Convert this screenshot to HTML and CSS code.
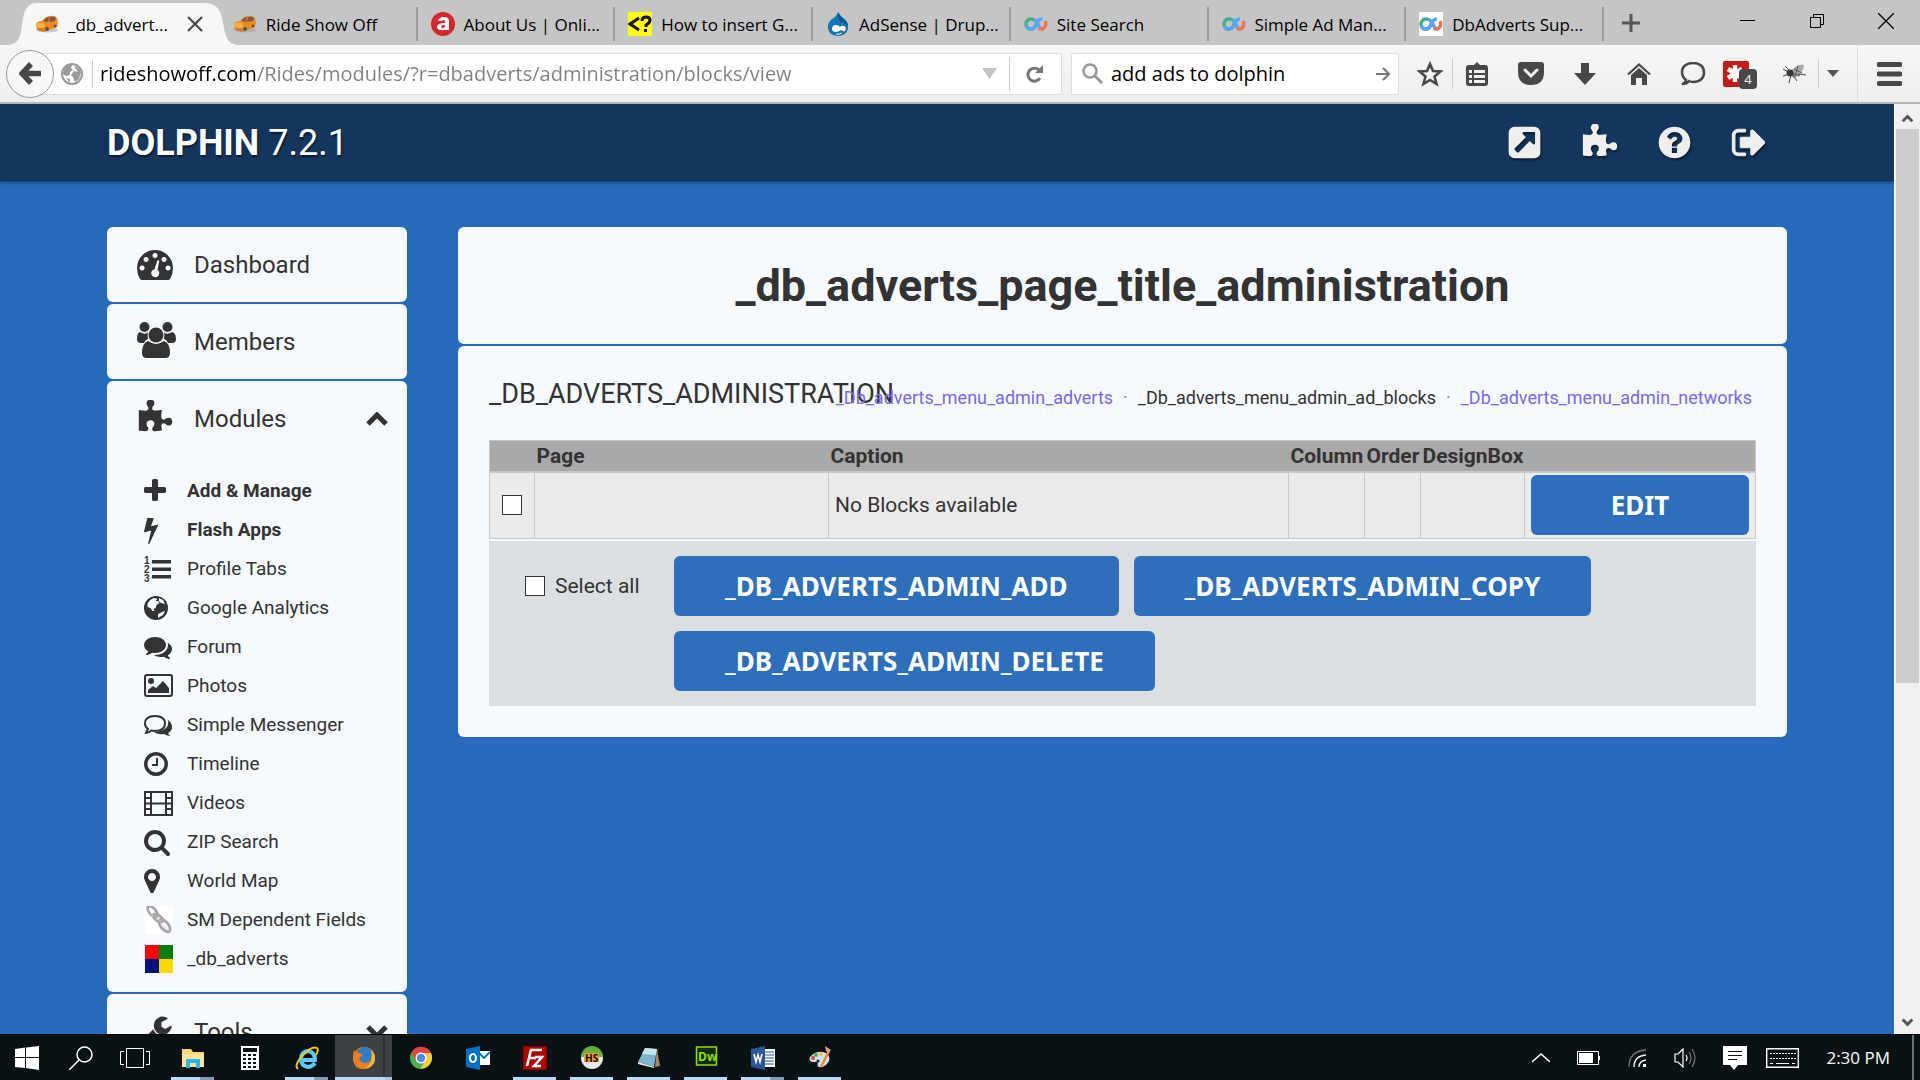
FILE: index.html
```html
<!DOCTYPE html>
<html lang="en">
<head>
    <meta charset="UTF-8" />
    <title>_db_adverts_page_title_administration</title>
    <link rel="stylesheet" href="styles.css">
</head>
<body>
    <!-- shared icons -->
    <svg class="sprite" aria-hidden="true">
        <symbol id="car" viewBox="0 0 24 20">
            <ellipse cx="12" cy="16" rx="11" ry="2.5" fill="#999" opacity=".5"/>
            <path d="M1 9q3-2 6-2 3-4 7-5 6-1 8 2l1 5-1 4-5 2-8 3-6-2q-2-2-2-7z" fill="#ef8a1d"/>
            <path d="M8 7q3-4 6-4l-1 5zM15 3q4-1 6 1l-1 3-6 1z" fill="#7d5a49"/>
            <path d="M1 9q4-1 8 0l1 4q-4 2-8 0z" fill="#f9b23c"/>
            <path d="M2 14l7 1v3l-6-2z" fill="#c87a2d"/>
            <circle cx="12" cy="15" r="2" fill="#555"/><circle cx="20" cy="12" r="1.500" fill="#555"/>
        </symbol>
        <symbol id="loop" viewBox="0 0 24 24">
            <g fill="none" stroke-width="3.5">
                <path d="M11 15a5 5 0 1 1-1-7" stroke="#43b08c"/>
                <path d="M2 14q2 4 6 3 3-1 4-5 2-5 6-5" stroke="#58a6ee"/>
                <path d="M10 8q3 1 4 4 1 5 5 5" stroke="#58a6ee"/>
                <path d="M15 16q2 2 5 0 3-3 1-7" stroke="#ee7456"/>
            </g>
        </symbol>
        <symbol id="puzzle" viewBox="0 0 1792 1792">
            <path d="M1755 1083q0 81-44.500 135t-123.500 54q-41 0-77.500-17.500t-59-38-56.500-38-71-17.500q-110 0-110 124 0 39 16 115t15 115v5q-22 0-33 1-34 3-97.500 11.500t-115.500 13.500-98 5q-61 0-103-26.500t-42-83.500q0-37 17.500-71t38-56.500 38-59 17.500-77.500q0-79-54-123.500t-135-44.500q-84 0-143 45.500t-59 127.500q0 43 15 83t33.500 64.500 33.500 53 15 50.500q0 45-46 89-37 35-117 35-95 0-245-24-9-2-27.500-4t-27.500-4l-13-2q-1 0-3-1-2 0-2-1v-1024q2 1 17.500 3.500t34 5 21.500 3.500q150 24 245 24 80 0 117-35 46-44 46-89 0-22-15-50.500t-33.500-53-33.500-64.500-15-83q0-82 59-127.500t144-45.500q80 0 134 44.500t54 123.500q0 41-17.500 77.500t-38 59-38 56.500-17.500 71q0 57 42 83.500t103 26.500q64 0 180-15t163-17v2q-1 2-3.500 17.500t-5 34-3.500 21.500q-24 150-24 245 0 80 35 117 44 46 89 46 22 0 50.500-15t53-33.500 64.500-33.500 83-15q82 0 127.500 59t45.500 143z"/>
        </symbol>
    </svg>

    <div class="window">
        <div class="tabbar">
            <div class="tabs">
                <div class="tab active">
                    <svg class="shape" width="240" height="42" viewBox="0 0 240 42"><path d="M4 42C16 42 18 36 20 22 22 5 26 0 36 0H202C214 0 219 6 221 20 224 36 226 42 238 42Z"/></svg>
                    <button class="tab-name"><svg class="fav"><use href="#car"/></svg>_db_advert...</button>
                    <button class="tab-close" aria-label="Close tab"><svg width="16" height="16" viewBox="0 0 16 16"><path d="M1 1l14 14M15 1L1 15" stroke="#444" stroke-width="2"/></svg></button>
                </div>
                <div class="tab"><button class="tab-name"><svg class="fav"><use href="#car"/></svg>Ride Show Off</button></div>
                <div class="tab"><button class="tab-name">
                    <svg class="fav" viewBox="0 0 24 24"><circle cx="12" cy="12" r="12" fill="#d9262c"/><path d="M7 9q1-4 6-4t5 4v9h-4q-7 1-8-3 0-4 8-4V9q-2-2-3 0z" fill="#fff"/><path d="M14 13q-4 0-4 2 1 2 4 0z" fill="#d9262c"/></svg>About Us | Onli...</button></div>
                <div class="tab"><button class="tab-name">
                    <svg class="fav" viewBox="0 0 24 24"><path d="M0 0h24v24H0z" fill="#ff0"/><path d="M11 6L2 12l9 6" fill="none" stroke="#111" stroke-width="3"/><path d="M14 9q0-4 4-4t4 3-4 5v2" fill="none" stroke="#111" stroke-width="3"/><path d="M16 17h3v3h-3z" fill="#111"/></svg>How to insert G...</button></div>
                <div class="tab"><button class="tab-name">
                    <svg class="fav" viewBox="0 0 24 24"><path d="M12 0q2 4 6 7 5 4 4 10-2 7-10 7T2 17Q1 11 6 7q5-3 6-7z" fill="#0c76b8"/><path d="M12 0q2 4 6 7 4 3 4 7-4-4-8-4-2-4-2-10z" fill="#045a94"/><path d="M6 17q0-4 4-4 3 0 4 2 2-2 4-1 3 1 1 5-1 1-4-1-3 2-5 2-4 0-4-3z" fill="#fff"/><path d="M10 22q3 1 6-1" stroke="#fff" fill="none"/></svg>AdSense | Drup...</button></div>
                <div class="tab"><button class="tab-name"><svg class="fav"><use href="#loop"/></svg>Site Search</button></div>
                <div class="tab"><button class="tab-name"><svg class="fav"><use href="#loop"/></svg>Simple Ad Man...</button></div>
                <div class="tab"><button class="tab-name"><svg class="fav white"><use href="#loop"/></svg>DbAdverts Sup...</button></div>
            </div>
            <button class="newtab" aria-label="New tab"><svg width="18" height="18" viewBox="0 0 18 18"><path d="M9 0v18M0 9h18" stroke="#555" stroke-width="3"/></svg></button>
            <button class="winbtn" aria-label="Minimize"><svg width="16" height="16" viewBox="0 0 16 16"><path d="M0 7.500h15" stroke="#000"/></svg></button>
            <button class="winbtn" aria-label="Restore"><svg width="16" height="16" viewBox="0 0 16 16" fill="none" stroke="#000"><path d="M1.500 4.500h10v10h-10zM4.500 4V1.500h10v10H12"/></svg></button>
            <button class="winbtn" aria-label="Close"><svg width="16" height="16" viewBox="0 0 16 16"><path d="M0 0l16 16M16 0L0 16" stroke="#000" stroke-width="1.300"/></svg></button>
        </div>

        <div class="toolbar">
            <button class="back" aria-label="Back"><svg width="22" height="23" viewBox="0 0 22 23"><path d="M12 2L3 11.500l9 9.500M4 11.500h18" fill="none" stroke="#484848" stroke-width="5.500"/></svg></button>
            <div class="urlbar">
                <svg class="globe" width="22" height="22" viewBox="0 0 22 22"><circle cx="11" cy="11" r="10" fill="#fff" stroke="#999" stroke-width="2"/><path d="M3 6q4-5 8-4l-1 3 2 2-3 2v3l-4 1-3-2zM13 3q5 1 7 6l-2 7-4 3-2-5-2-2 3-4 4 1-2-3zM5 15l4 1v4z" fill="#999"/></svg>
                <input class="url" type="text" aria-label="Address" value="rideshowoff.com/Rides/modules/?r=dbadverts/administration/blocks/view">
                <svg class="drop" width="15" height="11" viewBox="0 0 15 11"><path d="M0 0h15L7.500 11z" fill="#c4c4c4"/></svg>
                <button class="reload" aria-label="Reload"><svg width="18" height="18" viewBox="0 0 18 18"><path d="M14 13a6.500 6.500 0 1 1-1-8" fill="none" stroke="#777" stroke-width="3"/><path d="M17 0v8H9z" fill="#777"/></svg></button>
            </div>
            <div class="search">
                <svg width="21" height="21" viewBox="0 0 21 21" fill="none" stroke="#999"><circle cx="8" cy="8" r="6.500" stroke-width="2.500"/><path d="M13 13l7 7" stroke-width="3"/></svg>
                <input type="text" aria-label="Search" value="add ads to dolphin">
                <button aria-label="Go"><svg width="14" height="14" viewBox="0 0 14 14" fill="none" stroke="#777" stroke-width="2"><path d="M0 7h12M7 1l6 6-6 6"/></svg></button>
            </div>
            <button class="tool star" aria-label="Bookmark"><svg width="26" height="26" viewBox="0 0 26 26"><path d="M13 3l3 7 7.500.500-6 5 2 7.500-6.500-4-6.500 4 2-7.500-6-5L10 10z" fill="none" stroke="#484848" stroke-width="2.600"/></svg></button>
            <button class="tool line" aria-label="Bookmarks"><svg width="22" height="24" viewBox="0 0 22 24"><path d="M8 3l3-3 3 3h5q3 0 3 3v15q0 3-3 3H3q-3 0-3-3V6q0-3 3-3z" fill="#484848"/><path d="M3 8h3v3H3zM8 8h11v3H8zM3 13h3v3H3zM8 13h11v3H8zM3 18h3v3H3zM8 18h11v3H8z" fill="#f2f2f2"/></svg></button>
            <button class="tool" aria-label="Pocket"><svg width="26" height="23" viewBox="0 0 26 23"><path d="M3 0h20q3 0 3 3v7q0 13-13 13T0 10V3q0-3 3-3z" fill="#484848"/><path d="M7 8l6 6 6-6" fill="none" stroke="#f2f2f2" stroke-width="3" stroke-linecap="round"/></svg></button>
            <button class="tool" aria-label="Downloads"><svg width="22" height="22" viewBox="0 0 22 22"><path d="M7 0h8v10h7L11 22 0 10h7z" fill="#484848"/></svg></button>
            <button class="tool" aria-label="Home"><svg width="24" height="22" viewBox="0 0 24 22"><path d="M12 0l12 11-2 1L12 3 2 12l-2-1zM12 5l8 7v10h-5v-7H9v7H4V12z" fill="#484848"/></svg></button>
            <button class="tool" aria-label="Chat"><svg width="26" height="24" viewBox="0 0 26 24"><path d="M2 22q4-1 4-4-4-3-4-8 0-4 3-6.500T13 1q5 0 8 2.500t3 7-3 7-8 2.500q-2 0-4-1-2 3-7 3z" fill="none" stroke="#484848" stroke-width="2.500"/></svg></button>
            <button class="tool ext" aria-label="LastPass">
                <svg width="26" height="26" viewBox="0 0 26 26"><path d="M2 0h22q2 0 2 2v22q0 2-2 2H2q-2 0-2-2V2q0-2 2-2z" fill="#c9191b"/><path d="M12 4v17M5 8l14 9M19 8L5 17" stroke="#fff" stroke-width="4.500"/></svg>
                <span class="badge">4</span>
            </button>
            <button class="tool fly" aria-label="Add-on"><svg width="24" height="20" viewBox="0 0 24 20"><path d="M9 6q5-6 12-5 0 7-8 12-4 2-5-2z" fill="#aaa"/><path d="M11 5l8 4M9 9l8 3M15 2l-3 10" stroke="#555"/><circle cx="7" cy="9" r="3.500" fill="#333"/><path d="M0 5l6 3M0 12l6-2M6 19l2-8M14 17l-4-6M23 11l-8-1M2 2l5 5" stroke="#444"/></svg></button>
            <button class="tool line caret" aria-label="More"><svg width="12" height="7" viewBox="0 0 12 7"><path d="M0 0h12L6 7z" fill="#555"/></svg></button>
            <button class="tool line menu" aria-label="Menu"><svg width="25" height="24" viewBox="0 0 25 24"><path d="M2 2.500h21M2 12h21M2 21.500h21" stroke="#484848" stroke-width="5" stroke-linecap="round"/></svg></button>
        </div>

        <div class="viewport">
            <div class="page">
                <header class="header">
                    <div class="wrap">
                        <a class="logo" href="#"><b>DOLPHIN</b> 7.2.1</a>
                        <nav class="top-links">
                            <a href="#" aria-label="Site"><svg class="ico" viewBox="0 0 1792 1792"><path d="M1408 928v-480q0-26-19-45t-45-19h-480q-42 0-59 39-17 41 14 70l144 144-534 534q-19 19-19 45t19 45l102 102q19 19 45 19t45-19l534-534 144 144q18 19 45 19 12 0 25-5 39-17 39-59zm256-512v960q0 119-84.500 203.500t-203.500 84.500h-960q-119 0-203.500-84.500t-84.500-203.500v-960q0-119 84.500-203.500t203.500-84.500h960q119 0 203.500 84.500t84.500 203.500z"/></svg></a>
                            <a href="#" aria-label="Extensions"><svg class="ico"><use href="#puzzle"/></svg></a>
                            <a href="#" aria-label="Help"><svg class="ico" viewBox="0 0 1792 1792"><path d="M1024 1376v-192q0-14-9-23t-23-9h-192q-14 0-23 9t-9 23v192q0 14 9 23t23 9h192q14 0 23-9t9-23zm256-672q0-88-55.500-163t-138.500-116-170-41q-243 0-371 213-15 24 8 42l132 100q7 6 19 6 16 0 25-12 53-68 86-92 34-24 86-24 48 0 85.500 26t37.500 59q0 38-20 61t-68 45q-63 28-115.500 86.500t-52.500 125.500v36q0 14 9 23t23 9h192q14 0 23-9t9-23q0-19 21.500-49.500t54.500-49.500q32-18 49-28.500t46-35 44.500-48 28-60.500 12.500-81zm384 192q0 209-103 385.500t-279.500 279.500-385.500 103-385.500-103-279.500-279.500-103-385.500 103-385.500 279.500-279.500 385.500-103 385.500 103 279.500 279.500 103 385.500z"/></svg></a>
                            <a href="#" aria-label="Log out"><svg class="ico out" viewBox="0 0 1792 1792"><path d="M704 1440q0 4 1 20t.5 26.500-3 23.500-10 19.500-20.500 6.500h-320q-119 0-203.500-84.500t-84.500-203.500v-704q0-119 84.500-203.500t203.500-84.500h320q13 0 22.500 9.500t9.500 22.500q0 4 1 20t.5 26.500-3 23.500-10 19.500-20.500 6.500h-320q-66 0-113 47t-47 113v704q0 66 47 113t113 47h312l11.500 1 11.500 3 8 5.500 7 9 2 13.500zm928-544q0 26-19 45l-544 544q-19 19-45 19t-45-19-19-45v-288h-448q-26 0-45-19t-19-45v-384q0-26 19-45t45-19h448v-288q0-26 19-45t45-19 45 19l544 544q19 19 19 45z"/></svg></a>
                        </nav>
                    </div>
                </header>

                <div class="wrap content">
                    <nav class="sidebar">
                        <div class="box">
                            <a class="head" href="#"><svg class="big" viewBox="0 0 36 36"><path fill-rule="evenodd" d="M3 32Q0 27 0 21a18 18 0 0 1 36 0q0 6-3 11-1 1-2 1H5q-1 0-2-1zM5 18.500a2.500 2.500 0 1 0 .1 0zM9 10a2.500 2.500 0 1 0 .1 0zM18 6a2.500 2.500 0 1 0 .1 0zM27 10a2.500 2.500 0 1 0 .1 0zM31 18.500a2.500 2.500 0 1 0 .1 0zM20.500 13l-3 9.200a4 4 0 1 0 3 .6l1.800-9z"/></svg>Dashboard</a>
                        </div>
                        <div class="box">
                            <a class="head" href="#"><svg class="big" viewBox="0 2 36 36"><circle cx="7.500" cy="5" r="5"/><circle cx="30.500" cy="5" r="5"/><circle cx="19" cy="13" r="7.500"/><path d="M3 10q5 3 8 .5Q10 13 11 17q-3 1-4 4H4q-4 0-4-4 0-6 3-7zM35 10q-5 3-8 .5 1 2.500 0 6.500 3 1 4 4h4q4 0 4-4 0-6-4-7zM11 19q8 6 16 0 6 2 6 12 0 5-5 5H10q-5 0-5-5 0-10 6-12z"/></svg>Members</a>
                        </div>
                        <div class="box open">
                            <a class="head" href="#"><svg class="big" viewBox="0 1 36 36"><use href="#puzzle" width="36" height="36"/></svg>Modules
                                <svg class="chev" viewBox="0 0 22 14"><path d="M2 12l9-9 9 9" fill="none" stroke="#333" stroke-width="5"/></svg></a>
                            <ul class="sub">
                                <li><a href="#"><svg viewBox="192 0 1792 1792"><path d="M1600 736v192q0 40-28 68t-68 28h-416v416q0 40-28 68t-68 28h-192q-40 0-68-28t-28-68v-416h-416q-40 0-68-28t-28-68v-192q0-40 28-68t68-28h416v-416q0-40 28-68t68-28h192q40 0 68 28t28 68v416h416q40 0 68 28t28 68z"/></svg><b>Add &amp; Manage</b></a></li>
                                <li><a href="#"><svg viewBox="448 0 1792 1792"><path d="M1333 566q18 20 7 44l-540 1157q-13 25-42 25-4 0-14-2-17-5-25.500-19t-4.500-30l197-808-406 101q-4 1-12 1-18 0-31-11-18-15-13-39l201-825q4-14 16-23t28-9h328q19 0 32 12.500t13 29.500q0 8-5 18l-171 463 396-98q8-2 12-2 19 0 34 15z"/></svg><b>Flash Apps</b></a></li>
                                <li><a href="#"><svg viewBox="0 0 28 28"><path d="M8 5h19v3.500H8zM8 12.500h19V16H8zM8 20h19v3.500H8z"/><text x="0" y="9">1</text><text x="0" y="18">2</text><text x="0" y="27">3</text></svg>Profile Tabs</a></li>
                                <li><a href="#"><svg viewBox="0 0 28 28"><circle cx="12" cy="14" r="12"/><path d="M3.500 10q2-5 7-6l3 1-2 2 3 0 1 2-3 2-1 3-2 1 1 2h-2l-2-3-3-1zM15 4l4 2 2 4-4-1-2-2zM14 20l4-2 3-1-2 4-5 3z" fill="#f6f9fe"/></svg>Google Analytics</a></li>
                                <li><a href="#"><svg viewBox="0 0 1792 1792"><path d="M1408 768q0 139-94 257t-256.500 186.500-353.500 68.500q-86 0-176-16-124 88-278 128-36 9-86 16h-3q-11 0-20.500-8t-11.500-21q-1-3-1-6.500t.5-6.500 2-6l2.500-5 3.500-5.500 4-5 4.500-5 4-4.500q5-6 23-25t26-29.500 22.500-29 25-38.500 20.500-44q-124-72-195-177t-71-224q0-139 94-257t256.500-186.500 353.500-68.500 353.500 68.500 256.500 186.500 94 257zm384 256q0 120-71 224.500t-195 176.500q10 24 20.500 44t25 38.500 22.500 29 26 29.500 23 25q1 1 4 4.500t4.500 5 4 5 3.500 5.500l2.500 5 2 6 .5 6.500-1 6.500q-3 14-13 22t-22 7q-50-7-86-16-154-40-278-128-90 16-176 16-271 0-472-132 58 4 88 4 161 0 309-45t264-129q125-92 192-212t67-254q0-77-23-152 129 71 204 178t75 230z"/></svg>Forum</a></li>
                                <li><a href="#"><svg class="wide" viewBox="0 0 30 28"><rect x="1" y="3" width="27" height="21" rx="2" fill="none" stroke="#333" stroke-width="2"/><circle cx="7" cy="9" r="3"/><path d="M4 21v-3l5-4 3 2 7-7 6 7v5z"/></svg>Photos</a></li>
                                <li><a href="#"><svg viewBox="0 0 28 28"><path d="M11 5q10 0 10 7.500T11 20l-4-.5Q5 22 2 22l2-4q-3-2-3-5.500Q1 5 11 5z" fill="none" stroke="#333" stroke-width="2"/><path d="M24 9q4 3 4 7 0 4-4 6 1 3 3 3-4 0-7-2-6 1-10-2 8 0 12-4 3-3 2-8z"/></svg>Simple Messenger</a></li>
                                <li><a href="#"><svg viewBox="128 0 1792 1792"><path d="M1024 544v448q0 14-9 23t-23 9h-320q-14 0-23-9t-9-23v-64q0-14 9-23t23-9h224v-352q0-14 9-23t23-9h64q14 0 23 9t9 23zm416 352q0-148-73-273t-198-198-273-73-273 73-198 198-73 273 73 273 198 198 273 73 273-73 198-198 73-273zm224 0q0 209-103 385.500t-279.500 279.500-385.500 103-385.500-103-279.500-279.500-103-385.500 103-385.500 279.500-279.500 385.500-103 385.500 103 279.500 279.500 103 385.500z"/></svg>Timeline</a></li>
                                <li><a href="#"><svg class="wide" viewBox="0 0 30 28"><path d="M1 3h27v23H1zM7 3v23M22 3v23M7 14.500h15M1 9h6M1 14.500h6M1 20h6M22 9h6M22 14.500h6M22 20h6" fill="none" stroke="#333" stroke-width="2"/></svg>Videos</a></li>
                                <li><a href="#"><svg viewBox="64 0 1792 1792"><path d="M1216 832q0-185-131.500-316.500t-316.500-131.500-316.500 131.500-131.500 316.500 131.500 316.500 316.500 131.500 316.500-131.500 131.500-316.500zm512 832q0 52-38 90t-90 38q-54 0-90-38l-343-342q-179 124-399 124-143 0-273.500-55.500t-225-150-150-225-55.500-273.500 55.500-273.500 150-225 225-150 273.500-55.500 273.500 55.500 225 150 150 225 55.500 273.500q0 220-124 399l343 343q37 37 37 90z"/></svg>ZIP Search</a></li>
                                <li><a href="#"><svg viewBox="384 0 1792 1792"><path d="M1152 640q0-106-75-181t-181-75-181 75-75 181 75 181 181 75 181-75 75-181zm256 0q0 109-33 179l-364 774q-16 33-47.500 52t-67.500 19-67.500-19-46.500-52l-365-774q-33-70-33-179 0-212 150-362t362-150 362 150 150 362z"/></svg>World Map</a></li>
                                <li><a href="#"><svg class="wide" viewBox="0 0 30 30"><path d="M0 0h30v30H0z" fill="#fff"/><g fill="none" stroke="#aaa5aa" stroke-width="3"><ellipse cx="8" cy="6" rx="7" ry="3.500" transform="rotate(50 8 6)"/><ellipse cx="14" cy="13" rx="6" ry="3" transform="rotate(35 14 13)"/><ellipse cx="21" cy="21" rx="8" ry="4" transform="rotate(50 21 21)"/></g><path d="M4 4l5 8M12 12l7 6M19 19l6 8" stroke="#d0ccd0"/></svg>SM Dependent Fields</a></li>
                                <li><a href="#"><svg class="wide" viewBox="0 0 30 30"><path d="M0 0h15v15H0z" fill="#f00"/><path d="M15 0h15v15H15z" fill="#007f0e"/><path d="M0 15h15v15H0z" fill="#00137f"/><path d="M15 15h15v15H15z" fill="#ffd800"/></svg>_db_adverts</a></li>
                            </ul>
                        </div>
                        <div class="box">
                            <a class="head" href="#"><svg class="big" viewBox="0 0 1792 1792"><path d="M448 1472q0-26-19-45t-45-19-45 19-19 45 19 45 45 19 45-19 19-45zm644-420l-682 682q-37 37-90 37-52 0-91-37l-106-108q-38-36-38-90 0-53 38-91l681-681q39 98 114.500 173.500t173.500 114.500zm634-435q0 39-23 106-47 134-164.500 217.500t-258.500 83.500q-185 0-316.500-131.500t-131.500-316.500 131.500-316.500 316.500-131.500q58 0 121.500 16.500t107.500 46.500q16 11 16 28t-16 28l-293 169v224l193 107q5-3 79-48.500t135.500-81 70.500-35.500q15 0 23.500 10t8.500 25z"/></svg>Tools
                                <svg class="chev" viewBox="0 0 22 14"><path d="M2 2l9 9 9-9" fill="none" stroke="#333" stroke-width="5"/></svg></a>
                        </div>
                    </nav>

                    <main class="main">
                        <div class="box title"><h1>_db_adverts_page_title_administration</h1></div>
                        <div class="box panel">
                            <h2>_DB_ADVERTS_ADMINISTRATION</h2>
                            <div class="panel-menu">
                                <a href="#">_Db_adverts_menu_admin_adverts</a>
                                <i>·</i>
                                <a class="current" href="#">_Db_adverts_menu_admin_ad_blocks</a>
                                <i>·</i>
                                <a href="#">_Db_adverts_menu_admin_networks</a>
                            </div>
                            <table class="blocks">
                                <thead>
                                    <tr>
                                        <th class="c-check"></th>
                                        <th class="c-page">Page</th>
                                        <th>Caption</th>
                                        <th class="c-column">Column</th>
                                        <th class="c-order">Order</th>
                                        <th class="c-design">DesignBox</th>
                                        <th class="c-edit"></th>
                                    </tr>
                                </thead>
                                <tbody>
                                    <tr>
                                        <td class="c-check"><input type="checkbox" aria-label="Select block"></td>
                                        <td></td>
                                        <td>No Blocks available</td>
                                        <td></td>
                                        <td></td>
                                        <td></td>
                                        <td><button class="btn edit">EDIT</button></td>
                                    </tr>
                                </tbody>
                            </table>
                            <div class="controls">
                                <div class="all">
                                    <input type="checkbox" id="all"><label for="all">Select all</label>
                                </div>
                                <div class="buttons">
                                    <button class="btn">_DB_ADVERTS_ADMIN_ADD</button>
                                    <button class="btn">_DB_ADVERTS_ADMIN_COPY</button>
                                    <button class="btn">_DB_ADVERTS_ADMIN_DELETE</button>
                                </div>
                            </div>
                        </div>
                    </main>
                </div>
            </div>
            <div class="scrollbar">
                <svg viewBox="0 0 26 26"><path d="M8 18l5-5 5 5" fill="none" stroke="#555" stroke-width="3"/></svg>
                <div class="track"><div class="thumb"></div></div>
                <svg viewBox="0 0 26 26"><path d="M8 11l5 5 5-5" fill="none" stroke="#555" stroke-width="3"/></svg>
            </div>
        </div>

        <div class="taskbar">
            <button class="sys" aria-label="Start"><svg viewBox="0 0 24 24"><path d="M0 3l10-1.500V11H0zM11 1.500L24 0v11H11zM0 12h10v10L0 21zM11 12h13v12l-13-2z" fill="#fff"/></svg></button>
            <button class="sys" aria-label="Search"><svg viewBox="0 0 24 24" fill="none" stroke="#fff" stroke-width="1.500"><circle cx="15.500" cy="8.500" r="7.500"/><path d="M10 14L0 24"/></svg></button>
            <button class="sys" aria-label="Task view"><svg class="wide" viewBox="0 0 30 24" fill="none" stroke="#fff"><path d="M6.500 2.500h17v19h-17zM4 5.500H.5v13H4M26 5.500h3.500v13H26"/></svg></button>
            <button class="app run multi" aria-label="File Explorer"><svg viewBox="0 0 24 24"><path d="M1 3h9l2 3h11v15H1z" fill="#f8d775"/><path d="M1 8h22v13H1z" fill="#fce59a"/><path d="M5 22v-9h14v9h-4v-5H9v5z" fill="#29b6f0"/></svg></button>
            <button class="app" aria-label="Calculator"><svg viewBox="0 0 24 24"><path d="M3 0h18v24H3z" fill="#fff"/><path d="M5 2h14v4H5zM5 8h3v2H5zM10 8h3v2h-3zM15 8h3v2h-3zM5 12h3v2H5zM10 12h3v2h-3zM15 12h3v2h-3zM5 16h3v2H5zM10 16h3v2h-3zM15 16h3v2h-3zM5 20h3v2H5zM10 20h3v2h-3zM15 20h3v2h-3z" fill="#0b1216"/></svg></button>
            <button class="app run multi" aria-label="Internet Explorer"><svg viewBox="0 0 24 24"><path d="M20 17q-3 4-7 4-7-1-7-8t7-8q7 1 7 9H8" fill="none" stroke="#5cc8f4" stroke-width="4"/><path d="M3 23Q-1 20 6 11 17-1 22 2q2 2-1 7" fill="none" stroke="#f4c51c" stroke-width="2"/></svg></button>
            <button class="app run multi active" aria-label="Firefox"><svg viewBox="0 0 24 24"><circle cx="12" cy="12" r="11" fill="#e66a1f"/><circle cx="13" cy="9" r="8" fill="#2f7fc4"/><path d="M2 4q2 3 6 3l3 2-4 3q2 6 8 5 7-2 5-12 5 7 1 13-4 6-11 5Q1 22 1 12q0-5 1-8z" fill="#ee7d1e"/><path d="M19 3q6 7 3 14-4 6-9 5 9-4 6-19z" fill="#f9b934"/></svg></button>
            <button class="app" aria-label="Chrome"><svg viewBox="0 0 24 24"><circle cx="12" cy="12" r="11" fill="#4caf50"/><path d="M2.500 6.500A11 11 0 0 1 22 7H12l-5 8z" fill="#e2453a"/><path d="M22 7q3 8-3 13-4 3-8 3l6-9-1-5-4-2z" fill="#fbcf3b"/><circle cx="12" cy="12" r="5.500" fill="#fff"/><circle cx="12" cy="12" r="4.200" fill="#4c8bf5"/></svg></button>
            <button class="app" aria-label="Outlook"><svg viewBox="0 0 24 24"><path d="M12 5h12v14H12z" fill="#fff"/><path d="M13 7l5 5 6-6" fill="none" stroke="#0072c6" stroke-width="1.800"/><path d="M0 3l14-3v24L0 21z" fill="#0072c6"/><ellipse cx="7" cy="12" rx="3" ry="4" fill="none" stroke="#fff" stroke-width="2"/></svg></button>
            <button class="app run" aria-label="FileZilla"><svg viewBox="0 0 24 24"><path d="M0 0h24v24H0z" fill="#b30000"/><path d="M.5.5h23v23H.5z" fill="none" stroke="#600" stroke-dasharray="1 1"/><path d="M4 20L8 4h11M6 12h7M12 11h7l-8 9h7" fill="none" stroke="#fff" stroke-width="2.500"/></svg></button>
            <button class="app run" aria-label="HomeSite"><svg viewBox="0 0 24 24"><circle cx="12" cy="12" r="11" fill="#e8e8e8"/><path d="M1 11a11 11 0 0 1 22 0z" fill="#63b13b"/><path d="M4 7h15v9H4z" fill="#f0a020"/><text class="tile dark" x="5" y="16">HS</text></svg></button>
            <button class="app run" aria-label="Notepad"><svg viewBox="0 0 24 24"><path d="M20 3l3 17-5 1z" fill="#a58b60"/><path d="M8 2l12 1-3 18-16-5z" fill="#78b8cb"/><path d="M8 2l12 1-1 6L5 8z" fill="#c8e6ee"/><path d="M1 16l16 5v1L1 18z" fill="#eee"/></svg></button>
            <button class="app run" aria-label="Dreamweaver"><svg viewBox="0 0 24 24"><path d="M2.500 1h20v18h-20z" fill="#122a05" stroke="#8ee000" stroke-width="1.500"/><text class="tile lime" x="4" y="15">Dw</text></svg></button>
            <button class="app run multi" aria-label="Word"><svg viewBox="0 0 24 24"><path d="M12 3h12v18H12z" fill="#fff"/><path d="M14 6h9M14 9h9M14 12h9M14 15h9M14 18h9" stroke="#2b579a"/><path d="M0 3l14-3v24L0 21z" fill="#2b579a"/><path d="M3 8l2 8 2-7 2 7 2-8" fill="none" stroke="#fff" stroke-width="1.600"/></svg></button>
            <button class="app run" aria-label="Paint"><svg viewBox="0 0 24 24"><path d="M2 11q5-6 13-5 8 2 6 9-4 7-10 6-2-1-1-4-1-2-4-1-6 0-4-5z" fill="#cfe3f0"/><circle cx="5" cy="12" r="2" fill="#d44"/><circle cx="8" cy="9" r="2" fill="#5a4"/><circle cx="13" cy="8" r="2" fill="#f2c22c"/><circle cx="10" cy="15" r="1.500" fill="#224"/><path d="M21 5l-8 16" stroke="#e98a2b" stroke-width="2.500"/><path d="M17 0l6 4-3 3-2-2z" fill="#dba778"/></svg></button>

            <div class="tray">
                <svg width="18" height="10" viewBox="0 0 18 10"><path d="M0 9l9-8 9 8" fill="none" stroke="#fff" stroke-width="1.500"/></svg>
                <svg width="24" height="14" viewBox="0 0 24 14"><path d="M.5.5h21v13H.5zM22.500 5v4" fill="none" stroke="#fff"/><path d="M2 2h14v10H2z" fill="#fff"/></svg>
                <svg width="19" height="18" viewBox="0 0 19 18" fill="none" stroke="#fff" stroke-width="1.300"><path d="M1 18Q1 2 18 1" stroke="#777"/><path d="M6 18Q6 7 18 6M11 18q0-6 7-7"/><path d="M15 15h3v3h-3z" fill="#fff" stroke="none"/></svg>
                <svg width="22" height="20" viewBox="0 0 22 20" fill="none" stroke="#fff" stroke-width="1.200"><path d="M1 6h3l5-5v18l-5-5H1zM12 7q2 3 0 6"/><path d="M15 4q4 6 0 12M18 1q6 9 0 18" stroke="#777"/></svg>
                <svg width="24" height="24" viewBox="0 0 24 24"><path d="M0 0h24v19H15l-4 5-4-5H0z" fill="#fff"/><path d="M5 5.500h14M5 9.500h14M5 13.500h9" stroke="#0b1216"/></svg>
                <svg class="keys" width="33" height="20" viewBox="0 0 33 20" fill="none" stroke="#fff"><path d="M.7.700h31.600v18.600H.7z" stroke-width="1.400"/><path d="M4 5.500h26M4 10.500h26" stroke-dasharray="2 1"/><path d="M4 15.500h3M10 15.500h13M26 15.500h3"/></svg>
                <span class="clock">2:30 PM</span>
            </div>
        </div>
    </div>
</body>
</html>
```

FILE: styles.css
```css
*{
    margin:0;
    padding:0;
    box-sizing:border-box;
    list-style:none;
}
body{
    font-family:Roboto, "Liberation Sans", sans-serif;
    font-size:21px;
    color:#333;
}
a{
    color:inherit;
    text-decoration:none;
}
button,input{
    font:inherit;
    color:inherit;
    border:0;
    background:none;
}
svg{
    display:block;
    flex:none;
}
.sprite{
    position:absolute;
    width:0;
    height:0;
}
.window{
    height:100vh;
    display:flex;
    flex-direction:column;
    overflow:hidden;
}

/* tabs */
.tabbar{
    flex:none;
    display:flex;
    height:45px;
    padding-left:22px;
    background:#c5c5c5;
    font:17px "Open Sans", "Noto Sans", sans-serif;
    color:#000;
}
.tabs{
    flex:1;
    display:grid;
    grid-template-columns:repeat(8, 1fr);
}
.tab{
    position:relative;
    display:flex;
    align-items:center;
    padding:3px 0 0 13px;
    white-space:nowrap;
}
.tab:not(.active):after{
    content:"";
    position:absolute;
    right:0;
    top:7px;
    width:2px;
    height:34px;
    background:#9d9d9d;
}
.tab-name{
    position:relative;
    display:flex;
    align-items:center;
    gap:9px;
}
.tab-close{
    position:relative;
    margin:0 17px 0 auto;
}
.shape{
    position:absolute;
    left:-20px;
    bottom:0;
    fill:#f7f7f7;
}
.fav{
    width:24px;
    height:24px;
}
.white{
    background:#fff;
}
.newtab{
    width:109px;
    padding-left:18px;
}
.winbtn{
    width:69px;
    height:42px;
    display:flex;
    align-items:center;
    justify-content:center;
}

/* toolbar */
.toolbar{
    flex:none;
    display:flex;
    align-items:center;
    height:59px;
    padding-left:6px;
    background:linear-gradient(#f6f6f6, #eee);
    border-bottom:2px solid #b7b7b7;
    font:20px "Open Sans", "Noto Sans", sans-serif;
    color:#000;
}
.back{
    position:relative;
    width:48px;
    height:48px;
    display:flex;
    align-items:center;
    justify-content:center;
    border:1px solid #999;
    border-radius:50%;
    background:#f7f7f7;
}
.urlbar,.search{
    display:flex;
    align-items:center;
    height:42px;
    background:#fff;
    border:1px solid #ddd;
    border-radius:2px;
}
.urlbar{
    flex:1;
    margin-left:-24px;
    padding-left:30px;
}
.url{
    flex:1;
    min-width:0;
    height:28px;
    margin-left:9px;
    padding-left:7px;
    border-left:1px solid #ccc;
    color:transparent;
    background:linear-gradient(90deg, #000 163px, #808080 163px);
    -webkit-background-clip:text;
    background-clip:text;
}
.drop{
    margin-right:12px;
}
.reload{
    height:34px;
    padding:0 17px 0 16px;
    border-left:1px solid #ccc;
}
.search{
    width:328px;
    margin-left:9px;
    padding:0 8px 0 10px;
}
.search input{
    flex:1;
    min-width:0;
    margin-left:8px;
}
.tool{
    position:relative;
    width:54px;
    height:30px;
    display:flex;
    align-items:center;
    justify-content:center;
}
.star{
    width:44px;
    margin-left:9px;
}
.line{
    width:52px;
    padding-right:3px;
    border-left:1px solid #ccc;
}
.ext{
    width:40px;
    justify-content:flex-start;
    padding-left:3px;
}
.badge{
    position:absolute;
    right:3px;
    bottom:0;
    width:18px;
    height:20px;
    border-radius:4px;
    background:#484848;
    color:#fff;
    font-size:13px;
    line-height:20px;
}
.fly{
    width:46px;
    margin-left:12px;
}
.caret{
    width:32px;
}
.menu{
    width:63px;
    height:57px;
    margin-left:7px;
    padding:0;
    border-color:#ddd;
}

/* page */
.viewport{
    flex:1;
    min-height:0;
    display:flex;
}
.page{
    flex:1;
    overflow:hidden;
    background:#276abc;
}
.wrap{
    width:calc(100% - 40px);
    max-width:1680px;
    margin:0 auto;
}
.header{
    height:77px;
    background:#14365d;
    border-bottom:1px solid #10284a;
    box-shadow:0 1px 4px rgba(0,0,0,.5);
}
.header .wrap{
    display:flex;
    align-items:center;
    justify-content:space-between;
    height:76px;
}
.logo{
    padding-top:2px;
    font-size:36px;
    color:#fff;
    text-shadow:1px 2px 2px rgba(0,0,0,.5);
}
.top-links{
    display:flex;
    gap:38px;
    padding-right:19px;
}
.ico{
    width:37px;
    height:37px;
    fill:#eee;
    filter:drop-shadow(1px 2px 1px rgba(0,0,0,.5));
}
.out{
    stroke:#eee;
    stroke-width:50;
}
.content{
    display:flex;
    align-items:flex-start;
    gap:51px;
    padding-top:46px;
}
.box{
    margin-bottom:2px;
    background:#f6f9fe;
    border-radius:6px;
}
.sidebar{
    flex:none;
    width:300px;
}
.head{
    display:flex;
    align-items:center;
    height:75px;
    padding:0 19px 0 30px;
    font-size:24px;
}
.big{
    width:36px;
    height:36px;
    margin-right:21px;
    overflow:visible;
    fill:#333;
}
.chev{
    width:22px;
    height:14px;
    margin-left:auto;
}
.open{
    padding-bottom:14px;
}
.sub{
    padding:15px 0 0 37px;
}
.sub a{
    display:flex;
    align-items:center;
    height:39px;
    font-size:19px;
}
.sub svg{
    width:28px;
    height:28px;
    margin-right:15px;
    fill:#333;
}
.sub svg.wide{
    width:30px;
    margin-right:13px;
}
.sub text{
    font:bold 10px "Liberation Sans", sans-serif;
}
.main{
    flex:1;
    min-width:0;
}
.title{
    padding:32px 30px;
    text-align:center;
}
.title h1{
    font-size:45px;
    line-height:53px;
}
.panel{
    position:relative;
    padding:31px 31px;
}
.panel h2{
    font-size:27px;
    font-weight:normal;
    line-height:34px;
    margin-bottom:29px;
}
/* the menu runs over the end of a long heading */
.panel-menu{
    position:absolute;
    right:35px;
    top:40px;
    display:flex;
    gap:10px;
    font-size:18px;
    line-height:24px;
    color:#7b68ee;
}
.panel-menu i{
    color:#888;
    font-style:normal;
}
.panel-menu .current{
    color:#333;
}
.blocks{
    width:100%;
    table-layout:fixed;
    border-collapse:collapse;
    border:1px solid #c8c8c8;
}
.blocks th{
    height:31px;
    padding:0 2px;
    background:#a9a9a9;
    border-bottom:2px solid #c8c8c8;
    text-align:left;
}
.blocks td{
    height:67px;
    padding:0 6px;
    background:#ebebeb;
    border:1px solid #c8c8c8;
}
.blocks .c-check{
    width:45px;
    text-align:center;
}
.c-page{
    width:294px;
}
.c-column{
    width:76px;
}
.c-order{
    width:56px;
}
.c-design{
    width:104px;
}
.c-edit{
    width:231px;
}
input[type=checkbox]{
    appearance:none;
    display:block;
    width:20px;
    height:20px;
    background:#fff;
    border:1px solid #333;
}
.c-check input{
    margin:0 auto;
}
.btn{
    height:60px;
    padding:0 51px;
    border-radius:6px;
    background:#2d6fbb;
    color:#fff;
    font:bold 26px "Noto Sans", "Open Sans", sans-serif;
}
.edit{
    display:block;
    width:100%;
}
.controls{
    display:flex;
    margin-top:2px;
    padding:15px 15px 15px 36px;
    background:#dbdfe2;
}
.all{
    flex:none;
    display:flex;
    align-items:center;
    gap:10px;
    width:149px;
    height:60px;
}
.buttons{
    display:flex;
    flex-wrap:wrap;
    gap:15px;
}
.scrollbar{
    flex:none;
    width:26px;
    display:flex;
    flex-direction:column;
    background:#f0f0f0;
    border-left:1px solid #fff;
}
.track{
    flex:1;
}
.thumb{
    height:63%;
    margin:0 1px;
    background:#cdcdcd;
}

/* taskbar */
.taskbar{
    flex:none;
    display:flex;
    height:46px;
    background:#0b1216;
    border-top:1px solid #000;
    color:#fff;
}
.sys,.app{
    display:flex;
    align-items:center;
    justify-content:center;
}
.sys{
    width:54px;
}
.app{
    position:relative;
    width:57px;
}
.sys + .app{
    margin-left:2px;
}
.taskbar button svg{
    width:24px;
    height:24px;
}
.taskbar button .wide{
    width:30px;
}
.run:after{
    content:"";
    position:absolute;
    left:7px;
    right:7px;
    bottom:0;
    height:3px;
    background:#b3dcff;
}
.multi:after{
    background:linear-gradient(90deg, #b3dcff 29px, #839cb4 29px);
}
.active.app{
    background:linear-gradient(90deg, #3c4144 48px, #2d3235 48px, #2d3235 50px, #3c4144 50px);
}
.active.app:after{
    left:0;
    right:0;
    background:linear-gradient(90deg, #b3dcff 50px, #a4c9e8 50px);
}
.tile{
    font:bold 10px "Open Sans", sans-serif;
}
.dark{
    fill:#111;
}
.lime{
    font-size:12px;
    fill:#8ee000;
}
.tray{
    display:flex;
    align-items:center;
    gap:27px;
    margin-left:auto;
    margin-right:6px;
    padding-right:22px;
    border-right:2px solid #6b7073;
}
.keys{
    margin-left:-8px;
}
.clock{
    font:17px "Open Sans", "Noto Sans", sans-serif;
}
```
